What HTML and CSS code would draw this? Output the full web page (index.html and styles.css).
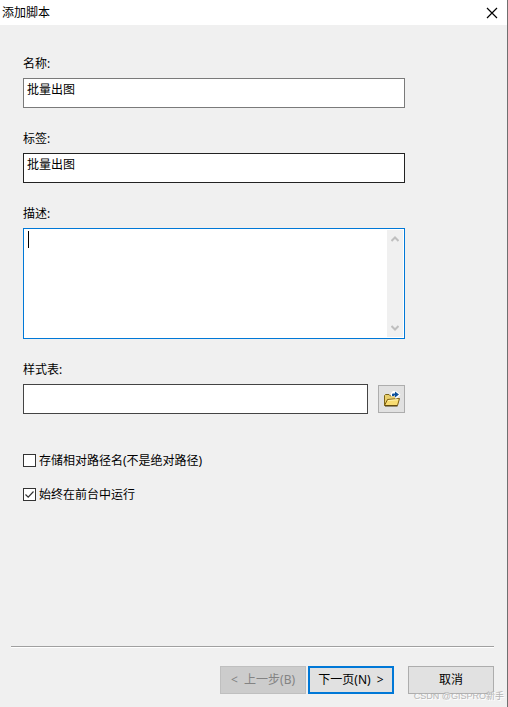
FILE: index.html
```html
<!DOCTYPE html>
<html lang="zh-CN">

<head>
    <meta charset="UTF-8">
    <meta name="viewport" content="width=device-width, initial-scale=1.0">
    <title>添加脚本</title>
    <link rel="stylesheet" href="styles.css">
</head>

<body>
    <div class="dialog">
        <div class="titlebar">
            <span class="title">添加脚本</span>
            <button type="button" class="close" aria-label="关闭">
                <svg width="12" height="12" viewBox="0 0 12 12">
                    <path d="M1 1L11 11M11 1L1 11" fill="none" stroke="#000" stroke-width="1.2" />
                </svg>
            </button>
        </div>
        <form class="content">
            <div class="field">
                <label for="name">名称:</label>
                <input type="text" id="name" class="text" value="批量出图">
            </div>
            <div class="field">
                <label for="tag">标签:</label>
                <input type="text" id="tag" class="text dark" value="批量出图">
            </div>
            <div class="field">
                <label for="desc">描述:</label>
                <div class="memo">
                    <textarea id="desc"></textarea>
                    <span class="caret"></span>
                    <div class="scrollbar">
                        <svg width="8" height="6" viewBox="0 0 8 6">
                            <path d="M0.5 5L4 1.5L7.5 5" fill="none" stroke="#bfbfbf" stroke-width="2" />
                        </svg>
                        <svg width="8" height="6" viewBox="0 0 8 6">
                            <path d="M0.5 1L4 4.5L7.5 1" fill="none" stroke="#bfbfbf" stroke-width="2" />
                        </svg>
                    </div>
                </div>
            </div>
            <div class="field">
                <label for="sheet">样式表:</label>
                <div class="row">
                    <input type="text" id="sheet" class="text medium">
                    <button type="button" class="browse" aria-label="浏览">
                        <svg width="18" height="16" viewBox="0 0 18 16">
                            <path d="M1.5 14.5V4.5L2.5 3.5H6L7.5 5H13.5V8" fill="#e8cf6e" stroke="#7b6518" />
                            <path d="M1.5 14.5L4.5 8.5L16.5 7.5L14.5 14.5Z" fill="#f8dc72" stroke="#7b5c10" />
                            <path d="M5 9.5L15 8.7" fill="none" stroke="#fff3b0" />
                            <path d="M2 15H14.5" fill="none" stroke="#4a390c" />
                            <path d="M8 5.5V2L10 0H13L17.5 3.5L13.5 7.5H12V5.5Z" fill="#fff" />
                            <path d="M9 5V3.5Q9 2.5 10 2.5H12V0.5L16 3.5L12 6.5V4.5H11V5Z" fill="#0b4f9c" />
                        </svg>
                    </button>
                </div>
            </div>
            <div class="options">
                <label class="option"><input type="checkbox"><span>存储相对路径名(不是绝对路径)</span></label>
                <label class="option"><input type="checkbox" checked><span>始终在前台中运行</span></label>
            </div>
        </form>
        <div class="footer">
            <button type="button" class="btn" disabled>&lt;&nbsp; 上一步(B)</button>
            <button type="button" class="btn primary">下一页(N) &nbsp;&gt;</button>
            <button type="button" class="btn cancel">取消</button>
        </div>
        <span class="watermark">CSDN @GISPRO新手</span>
    </div>
</body>

</html>
```
FILE: styles.css
```css
* {
    box-sizing: border-box;
}

body {
    margin: 0;
}

body,
input,
textarea,
button {
    font-family: "Noto Sans", "Noto Sans CJK SC", sans-serif;
    font-size: 12px;
    line-height: 16px;
    color: #000;
}

.dialog {
    position: relative;
    display: flex;
    flex-direction: column;
    min-height: 100vh;
    border-right: 1px solid #707070;
    background: #f0f0f0;
}

.titlebar {
    display: flex;
    justify-content: space-between;
    align-items: center;
    height: 25px;
    padding: 0 9px 0 2px;
    background: #fff;
}

.close {
    display: flex;
    padding: 0;
    border: 0;
    background: none;
}

.content {
    flex: 1;
    padding: 30px 102px 30px 23px;
}

.field {
    display: flex;
    flex-direction: column;
    gap: 5px;
    margin-bottom: 22px;
    line-height: 18px;
}

.text {
    width: 100%;
    height: 30px;
    padding: 0 3px 8px;
    border: 1px solid #7a7a7a;
    border-radius: 0;
    background: #fff;
    outline: none;
}

.dark {
    border-color: #222;
}

.medium {
    border-color: #444;
}

.memo {
    position: relative;
    display: flex;
    height: 111px;
    padding: 1px;
    border: 1px solid #0078d7;
    background: #fff;
}

.memo textarea {
    flex: 1;
    padding: 2px 3px;
    border: 0;
    outline: none;
    resize: none;
    overflow: hidden;
}

/* 文本光标 */
.caret {
    position: absolute;
    left: 4px;
    top: 2px;
    width: 1px;
    height: 17px;
    background: #000;
}

.scrollbar {
    display: flex;
    flex-direction: column;
    justify-content: space-between;
    align-items: center;
    width: 16px;
    padding: 6px 0;
    background: #f0f0f0;
}

.row {
    display: flex;
    align-items: center;
    gap: 10px;
}

.row .text {
    flex: 1;
}

.browse {
    display: flex;
    justify-content: center;
    align-items: center;
    width: 27px;
    height: 28px;
    padding: 0;
    border: 1px solid #adadad;
    background: #e1e1e1;
}

.options {
    display: flex;
    flex-direction: column;
    align-items: flex-start;
    gap: 16px;
    margin-top: 37px;
}

.option {
    display: flex;
    align-items: center;
    gap: 3px;
}

.option span {
    padding-top: 2px;
}

.option input {
    appearance: none;
    width: 13px;
    height: 13px;
    margin: 0;
    border: 1px solid #333;
    background: #fff;
}

.option input:checked {
    background: #fff url("data:image/svg+xml,%3Csvg xmlns='http://www.w3.org/2000/svg' viewBox='0 0 11 11'%3E%3Cpath d='M1.5 5.5L4.2 8.2L9.5 2.5' fill='none' stroke='%23333' stroke-width='1.2'/%3E%3C/svg%3E") center / 11px 11px no-repeat;
}

.footer {
    display: flex;
    justify-content: flex-end;
    gap: 2px;
    margin: 0 13px 0 11px;
    padding: 19px 0 13px;
    border-top: 1px solid #a0a0a0;
    box-shadow: inset 0 1px #fff;
}

.btn {
    width: 86px;
    height: 28px;
    padding: 0;
    border: 1px solid #adadad;
    background: #e1e1e1;
}

.btn:disabled {
    border-color: #bfbfbf;
    background: #ccc;
    color: #838383;
}

.primary {
    border: 2px solid #0078d7;
}

.cancel {
    margin-left: 12px;
}

.watermark {
    position: absolute;
    right: 3px;
    bottom: 3px;
    font-family: "Liberation Sans", "Noto Sans CJK SC", sans-serif;
    font-size: 9px;
    color: #b4b4b4;
    text-shadow: 1px 1px #fff;
    pointer-events: none;
}
```
